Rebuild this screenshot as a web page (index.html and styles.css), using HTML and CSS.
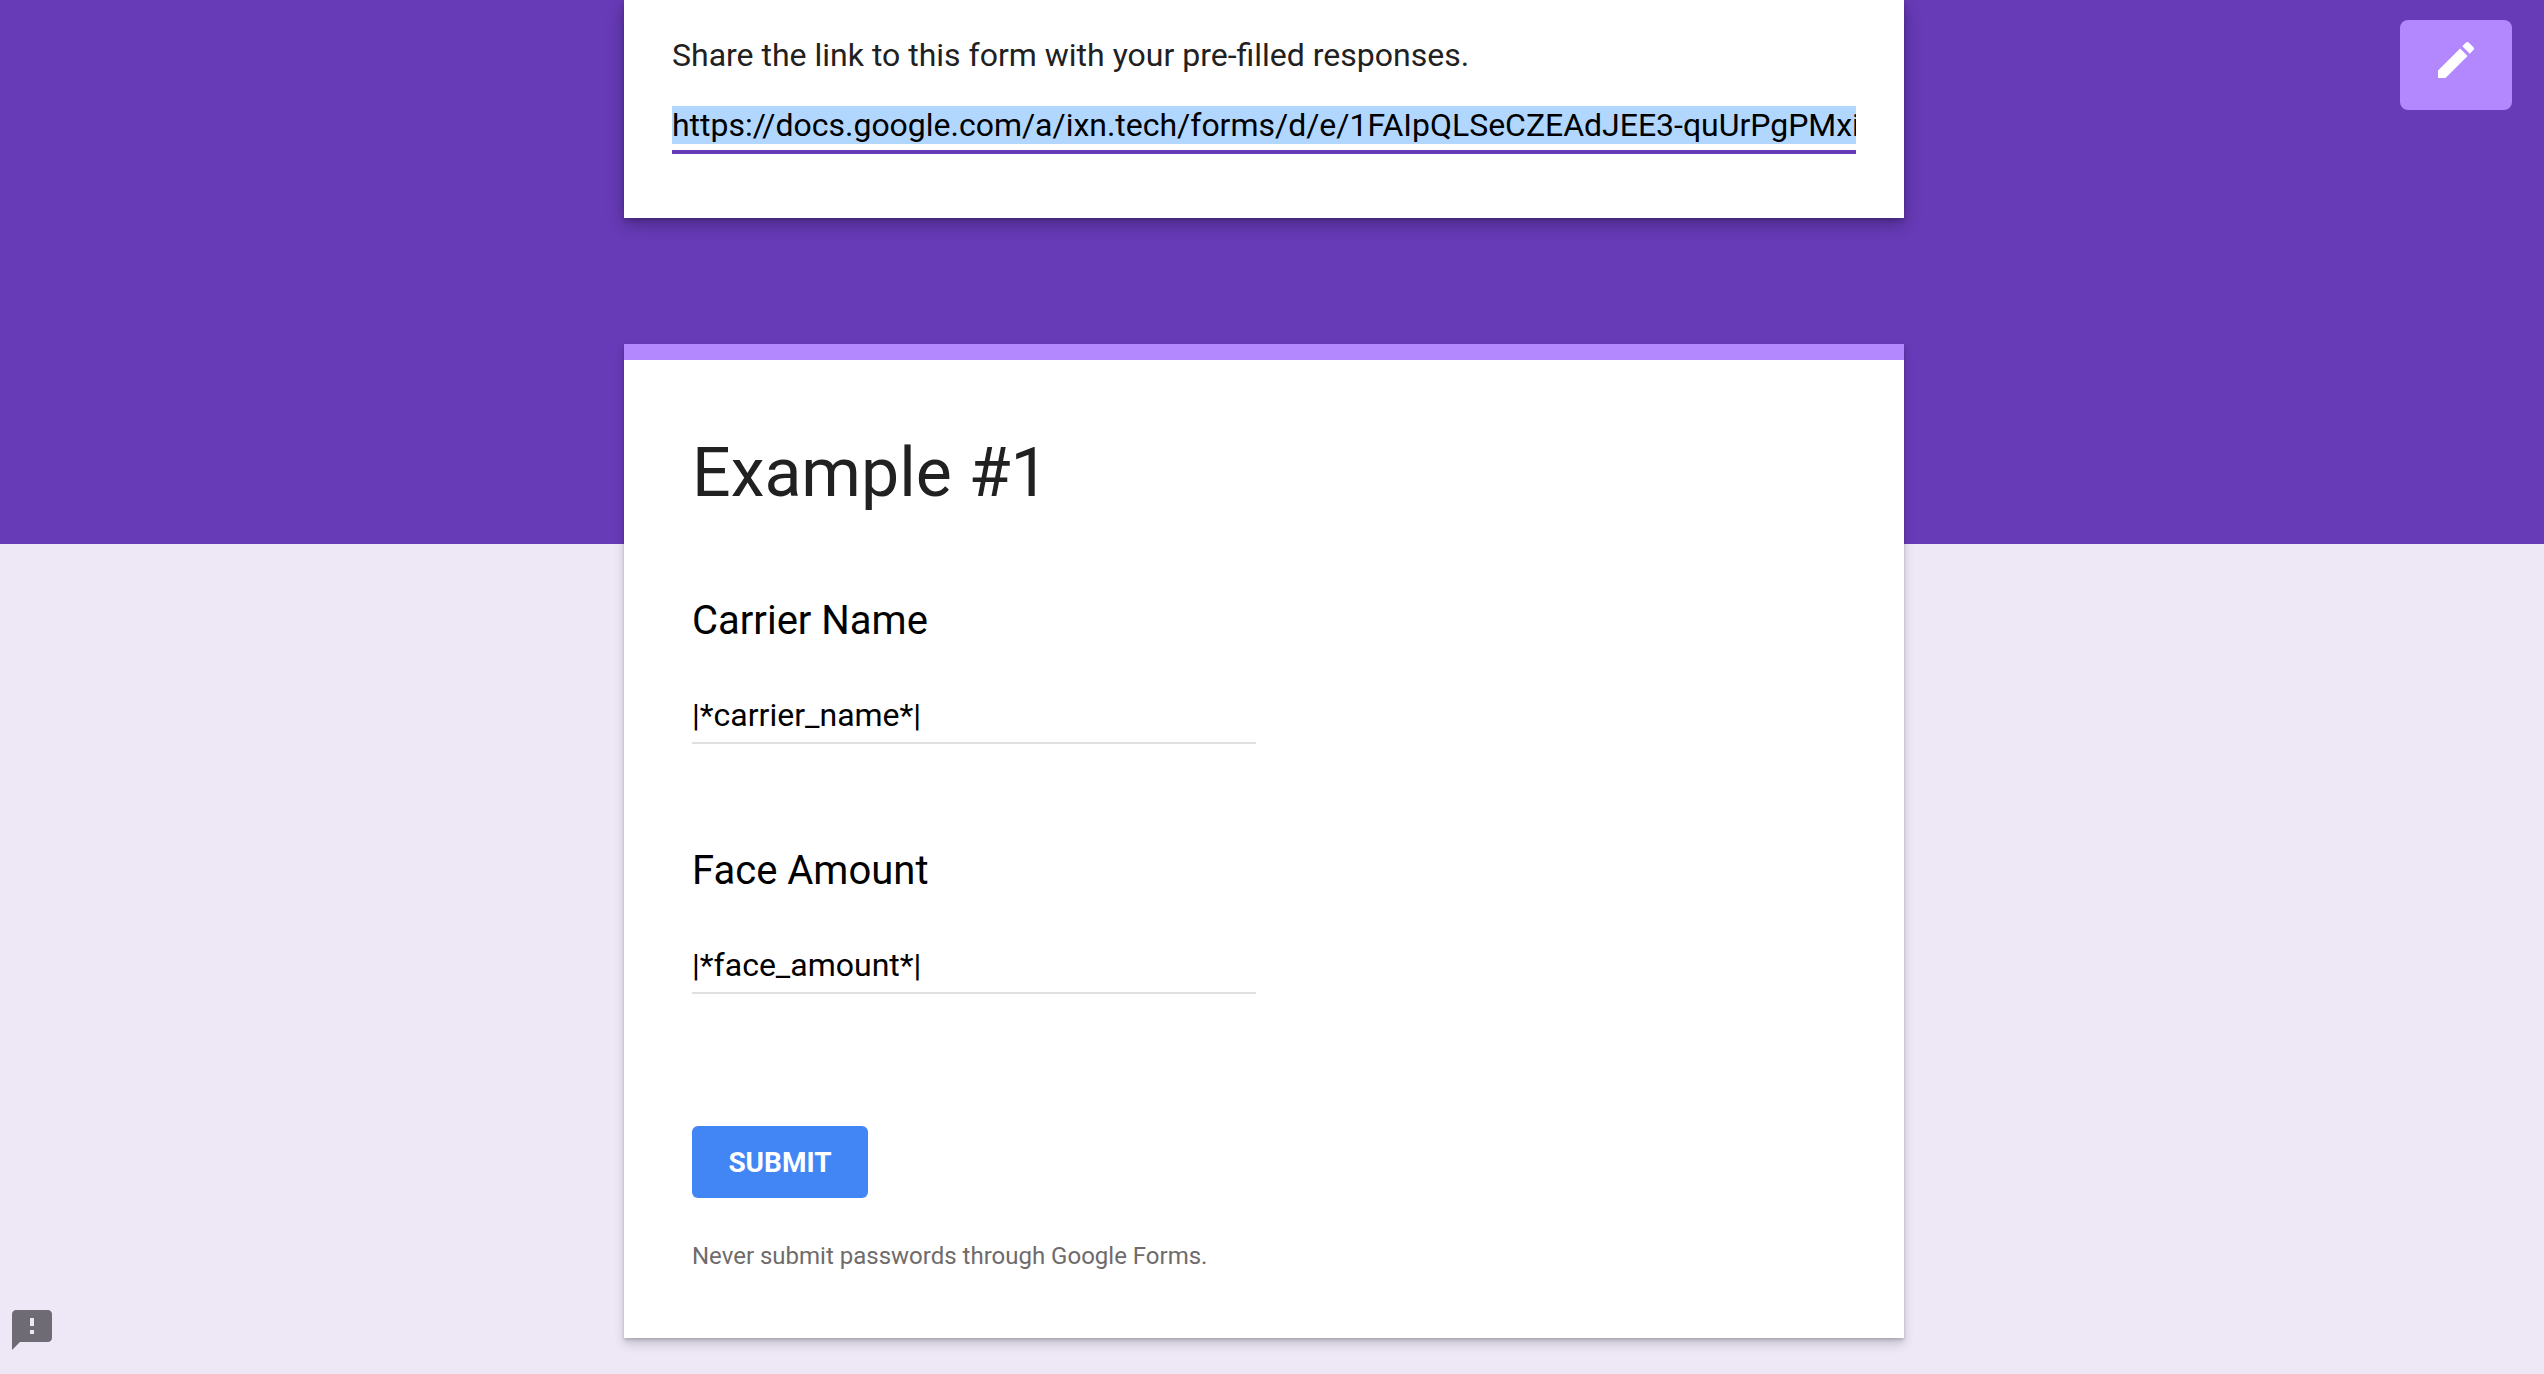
FILE: index.html
```html
<!DOCTYPE html>
<html lang="en">
<head>
<meta charset="utf-8">
<title>Example #1</title>
<link rel="stylesheet" href="styles.css">
</head>
<body>
<main class="column">
  <section class="card share">
    <p class="share-text">Share the link to this form with your pre-filled responses.</p>
    <div class="link-field"><div class="link-value">https://docs.google.com/a/ixn.tech/forms/d/e/1FAIpQLSeCZEAdJEE3-quUrPgPMxiQvXyTbNn4kLwR8sFhD2mA/viewform</div></div>
  </section>
  <form class="card form">
    <h1 class="form-title">Example #1</h1>
    <div class="question">
      <h2 class="question-label">Carrier Name</h2>
      <div class="answer">|*carrier_name*|</div>
    </div>
    <div class="question">
      <h2 class="question-label">Face Amount</h2>
      <div class="answer">|*face_amount*|</div>
    </div>
    <button class="submit" type="button">SUBMIT</button>
    <p class="note">Never submit passwords through Google Forms.</p>
  </form>
</main>
<a class="edit-button" aria-label="Edit">
  <svg class="icon" viewBox="0 0 24 24"><path d="M3 17.25V21h3.75L17.81 9.94l-3.75-3.75L3 17.25zM20.71 7.04c.39-.39.39-1.02 0-1.41l-2.34-2.34c-.39-.39-1.02-.39-1.41 0l-1.83 1.83 3.75 3.75 1.83-1.83z"/></svg>
</a>
<a class="report" aria-label="Report">
  <svg class="icon" viewBox="0 0 24 24"><path d="M20 2H4c-1.1 0-1.99.9-1.99 2L2 22l4-4h14c1.1 0 2-.9 2-2V4c0-1.1-.9-2-2-2zm-7 12h-2v-2h2v2zm0-4h-2V6h2v4z"/></svg>
</a>
</body>
</html>
```
FILE: styles.css
```css
* { box-sizing: border-box; }
html, body { margin: 0; height: 100%; overflow: hidden; }
body {
  background: linear-gradient(to bottom, #673ab7 0, #673ab7 544px, #ede7f6 544px);
  font-family: Roboto, "Liberation Sans", sans-serif;
  color: #212121;
}
.column {
  display: flex;
  flex-direction: column;
  align-items: center;
  padding-right: 16px;
}
.card {
  width: 1280px;
  background: #fff;
}
.share {
  padding: 31px 48px 64px;
  box-shadow: 0 6px 16px rgba(0, 0, 0, .28), 0 2px 4px rgba(0, 0, 0, .18);
}
.share-text {
  margin: 0;
  font-size: 32px;
  line-height: 48px;
}
.link-field {
  margin-top: 27px;
  padding-bottom: 6px;
  border-bottom: 4px solid #673ab7;
}
.link-value {
  height: 38px;
  overflow: hidden;
  white-space: nowrap;
  background: #b2d7ff;
  color: #000;
  font-size: 32px;
  letter-spacing: -.02px;
  line-height: 38px;
}
.form {
  margin-top: 126px;
  padding: 73px 68px 66px;
  border-top: 16px solid #b388ff;
  box-shadow: 0 6px 10px rgba(0, 0, 0, .16), 0 2px 3px rgba(0, 0, 0, .16);
}
.form-title {
  margin: 0;
  font-size: 68px;
  font-weight: 400;
  line-height: 80px;
}
.question {
  width: 564px;
  padding-top: 103px;
}
.question:first-of-type { padding-top: 84px; }
.question-label {
  margin: 0;
  color: #000;
  font-size: 40px;
  font-weight: 400;
  line-height: 48px;
}
.answer {
  margin-top: 51px;
  padding-bottom: 8px;
  border-bottom: 2px solid #e0e0e0;
  color: #000;
  font-size: 32px;
  line-height: 38px;
}
.submit {
  display: block;
  width: 176px;
  height: 72px;
  margin-top: 132px;
  padding: 2px 0 0;
  border: 0;
  border-radius: 6px;
  background: #4285f4;
  color: #fff;
  font: 700 28px/38px Roboto, "Liberation Sans", sans-serif;
}
.note {
  margin: 42px 0 0;
  color: #6f6b6b;
  font-size: 24px;
  line-height: 32px;
}
.edit-button {
  position: fixed;
  top: 20px;
  right: 32px;
  display: flex;
  justify-content: center;
  width: 112px;
  height: 90px;
  padding-top: 16px;
  border-radius: 8px;
  background: #b388ff;
  fill: #fff;
}
.report {
  position: fixed;
  left: 8px;
  bottom: 20px;
  display: flex;
  fill: #6f6b75;
}
.icon { display: block; width: 48px; height: 48px; }
```
